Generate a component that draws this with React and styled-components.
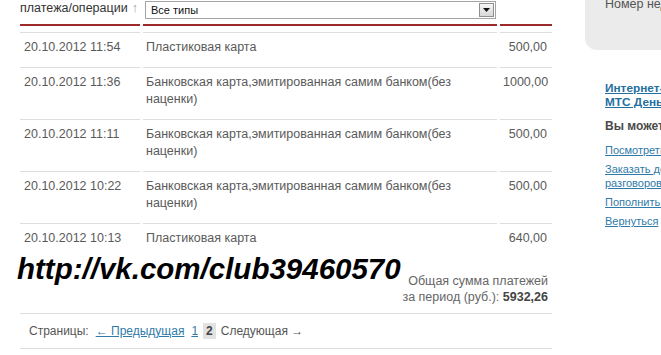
import React from 'react';
import styled, { createGlobalStyle } from 'styled-components';

const Global = createGlobalStyle`
    html, body {
        margin: 0;
        padding: 0;
        background: #fff;
        overflow: hidden;
    }
    body {
        font-family: "Liberation Sans", Arial, sans-serif;
        font-size: 12.5px;
        color: #555;
    }
`;

const Page = styled.div`
    position: relative;
    display: flex;
    width: 661px;
    height: 355px;
    overflow: hidden;
`;

const Main = styled.div`
    width: 532px;
    padding-left: 20px;
    flex-shrink: 0;
`;

const Grid = styled.div`
    display: grid;
    grid-template-columns: 120px 354px 52px;
    column-gap: 3px;
    width: 532px;
`;

const HeadCell = styled.div`
    height: 24px;
    border-bottom: 2px solid #9c2a2b;
    margin-bottom: 6px;
    color: #333;
    line-height: 17px;
    display: flex;
    align-items: flex-start;
    white-space: nowrap;
`;

const SortArrow = styled.span`
    color: #999;
    margin-left: 4px;
`;

const Select = styled.div`
    margin: 1px 1px 0 2px;
    height: 16px;
    flex: 1;
    border: 1px solid #a5a5a5;
    display: flex;
    align-items: center;
    justify-content: space-between;
    font-size: 11px;
    color: #111;
    padding-left: 5px;
`;

const SelectButton = styled.div`
    width: 15px;
    height: 14px;
    margin-right: 1px;
    border: 1px solid #8f8f8f;
    background: linear-gradient(#f6f6f6, #d8d8d8);
    display: flex;
    align-items: center;
    justify-content: center;
    box-sizing: border-box;
`;

const Cell = styled.div`
    border-top: 1px solid #dedede;
    padding: 6px ${p => (p.$right ? '5px' : '3px')} 11px ${p => (p.$first ? '4px' : '3px')};
    line-height: 17px;
    text-align: ${p => (p.$right ? 'right' : 'left')};
    color: #5a5a5a;
`;

const Total = styled.div`
    text-align: right;
    padding: 15px 4px 8px 0;
    line-height: 16px;
    color: #666;
    border-bottom: 1px solid #dedede;
    b {
        color: #444;
    }
`;

const Pager = styled.div`
    display: flex;
    align-items: center;
    gap: 7px;
    padding: 0 9px;
    height: 34px;
    border-bottom: 1px solid #dedede;
    color: #555;
    font-size: 12px;
`;

const PagerLink = styled.a`
    color: #2f7aa8;
    text-decoration: underline;
    cursor: pointer;
`;

const Current = styled.span`
    background: #e2e2e2;
    font-weight: bold;
    color: #444;
    padding: 1px 3px;
    margin: 0 -2px;
`;

const Side = styled.div`
    margin-left: 33px;
    width: 220px;
    flex-shrink: 0;
`;

const InfoBox = styled.div`
    background: #ebebeb;
    height: 52px;
    border-bottom-left-radius: 12px;
    padding: 0 0 0 20px;
    color: #555;
    line-height: 12px;
    margin-top: -2px;
`;

const SideList = styled.div`
    padding: 31px 0 0 20px;
    display: flex;
    flex-direction: column;
`;

const BoldLink = styled.a`
    font-size: 11.8px;
    font-weight: bold;
    color: #23709f;
    text-decoration: underline;
    line-height: 14px;
    white-space: nowrap;
`;

const SideTitle = styled.div`
    font-size: 12px;
    font-weight: bold;
    color: #4a4a4a;
    margin-top: 10px;
    margin-bottom: 5px;
    line-height: 14px;
    white-space: nowrap;
`;

const SmallLink = styled.a`
    font-size: 11px;
    color: #2f7aa8;
    text-decoration: underline;
    line-height: 14px;
    margin-top: 5px;
    white-space: nowrap;
`;

const Watermark = styled.div`
    position: absolute;
    left: 17px;
    top: 251px;
    font-family: "Liberation Sans", Arial, sans-serif;
    font-weight: bold;
    font-style: italic;
    font-size: 29.5px;
    color: #000;
    line-height: 36px;
    pointer-events: none;
`;

const rows = [
    { date: '20.10.2012 11:54', type: 'Пластиковая карта', sum: '500,00' },
    { date: '20.10.2012 11:36', type: 'Банковская карта,эмитированная самим банком(без наценки)', sum: '1000,00' },
    { date: '20.10.2012 11:11', type: 'Банковская карта,эмитированная самим банком(без наценки)', sum: '500,00' },
    { date: '20.10.2012 10:22', type: 'Банковская карта,эмитированная самим банком(без наценки)', sum: '500,00' },
    { date: '20.10.2012 10:13', type: 'Пластиковая карта', sum: '640,00' },
];

const App = () => {
    return (
        <Page>
            <Global />
            <Main>
                <Grid>
                    <HeadCell>
                        платежа/операции<SortArrow>↑</SortArrow>
                    </HeadCell>
                    <HeadCell>
                        <Select>
                            Все типы
                            <SelectButton>
                                <svg width="7" height="4" viewBox="0 0 7 4">
                                    <path d="M0 0h7L3.5 4z" fill="#111" />
                                </svg>
                            </SelectButton>
                        </Select>
                    </HeadCell>
                    <HeadCell />
                    {rows.map((r, i) => (
                        <React.Fragment key={i}>
                            <Cell $first>{r.date}</Cell>
                            <Cell>{r.type}</Cell>
                            <Cell $right>{r.sum}</Cell>
                        </React.Fragment>
                    ))}
                </Grid>
                <Total>
                    Общая сумма платежей<br />
                    за период (руб.): <b>5932,26</b>
                </Total>
                <Pager>
                    <span>Страницы:</span>
                    <PagerLink>← Предыдущая</PagerLink>
                    <PagerLink>1</PagerLink>
                    <Current>2</Current>
                    <span>Следующая →</span>
                </Pager>
            </Main>
            <Side>
                <InfoBox>Номер недоступен</InfoBox>
                <SideList>
                    <BoldLink>Интернет-помощник</BoldLink>
                    <BoldLink>МТС Деньги</BoldLink>
                    <SideTitle>Вы можете:</SideTitle>
                    <SmallLink>Посмотреть</SmallLink>
                    <SmallLink>Заказать детализацию<br />разговоров</SmallLink>
                    <SmallLink>Пополнить счет</SmallLink>
                    <SmallLink>Вернуться</SmallLink>
                </SideList>
            </Side>
            <Watermark>http://vk.com/club39460570</Watermark>
        </Page>
    );
};

export default App;
